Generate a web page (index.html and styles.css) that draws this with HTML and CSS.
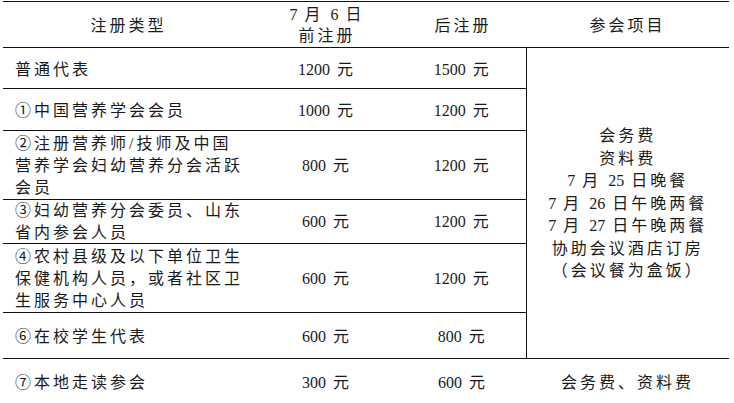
FILE: index.html
```html
<!DOCTYPE html>
<html lang="zh">
<head>
<meta charset="utf-8">
<title>注册类型</title>
<link rel="stylesheet" href="styles.css">
</head>
<body>
<table class="fees">
  <colgroup>
    <col class="c1"><col class="c2"><col class="c3"><col class="c4">
  </colgroup>
  <tr class="h-head">
    <td class="center single">注册类型</td>
    <td class="center two"><span class="n">7</span> 月 <span class="n">6</span> 日<br>前注册</td>
    <td class="center single">后注册</td>
    <td class="center single">参会项目</td>
  </tr>
  <tr class="h-r1 single-row">
    <td class="type">普通代表</td>
    <td class="center"><span class="n">1200</span> 元</td>
    <td class="center"><span class="n">1500</span> 元</td>
    <td class="center items" rowspan="6">会务费<br>资料费<br><span class="n">7</span> 月 <span class="n">25</span> 日晚餐<br><span class="n">7</span> 月 <span class="n">26</span> 日午晚两餐<br><span class="n">7</span> 月 <span class="n">27</span> 日午晚两餐<br>协助会议酒店订房<br>（会议餐为盒饭）</td>
  </tr>
  <tr class="h-r2 single-row">
    <td class="type">①中国营养学会会员</td>
    <td class="center"><span class="n">1000</span> 元</td>
    <td class="center"><span class="n">1200</span> 元</td>
  </tr>
  <tr class="h-r3 three-row">
    <td class="type">②注册营养师/技师及中国<br>营养学会妇幼营养分会活跃<br>会员</td>
    <td class="center"><span class="n">800</span> 元</td>
    <td class="center"><span class="n">1200</span> 元</td>
  </tr>
  <tr class="h-r4 two-row">
    <td class="type">③妇幼营养分会委员、山东<br>省内参会人员</td>
    <td class="center"><span class="n">600</span> 元</td>
    <td class="center"><span class="n">1200</span> 元</td>
  </tr>
  <tr class="h-r5 three-row">
    <td class="type">④农村县级及以下单位卫生<br>保健机构人员，或者社区卫<br>生服务中心人员</td>
    <td class="center"><span class="n">600</span> 元</td>
    <td class="center"><span class="n">1200</span> 元</td>
  </tr>
  <tr class="h-r6 single-row">
    <td class="type">⑥在校学生代表</td>
    <td class="center"><span class="n">600</span> 元</td>
    <td class="center"><span class="n">800</span> 元</td>
  </tr>
  <tr class="h-r7 single-row">
    <td class="type">⑦本地走读参会</td>
    <td class="center"><span class="n">300</span> 元</td>
    <td class="center"><span class="n">600</span> 元</td>
    <td class="center">会务费、资料费</td>
  </tr>
</table>
</body>
</html>
```

FILE: styles.css
```css
html, body {
  margin: 0;
  padding: 0;
  background: #fff;
  overflow: hidden;
}

body {
  width: 734px;
  height: 403px;
}

.fees {
  margin: 1px 0 0 3px;
  width: 726px;
  table-layout: fixed;
  border-collapse: collapse;
  border-top: 1px solid #111;
  font-family: "Liberation Serif", "Noto Sans CJK SC", serif;
  font-size: 16px;
  line-height: 22.5px;
  letter-spacing: 3px;
  color: #1a1a1a;
}

.c1 { width: 251px; }
.c2 { width: 146px; }
.c3 { width: 126px; }
.c4 { width: 203px; }

.fees td {
  padding: 0;
  vertical-align: middle;
  white-space: nowrap;
  border-bottom: 1px solid #111;
}

.fees td.type {
  padding-left: 12px;
  text-align: left;
}

.fees td.center {
  text-align: center;
}

.fees td.single,
.single-row td {
  padding-top: 4px;
}

.three-row td {
  padding-top: 2px;
  line-height: 22px;
}

.two-row td {
  line-height: 21.5px;
}

.fees td.items {
  padding-top: 2px;
  line-height: 22.5px;
}

.fees td.two {
  line-height: 21px;
}

.fees td.items {
  border-left: 1px solid #111;
}

.n {
  letter-spacing: 0;
}

.h-head { height: 46px; }
.h-r1 { height: 41px; }
.h-r2 { height: 42px; }
.h-r3 { height: 69px; }
.h-r4 { height: 44px; }
.h-r5 { height: 69px; }
.h-r6 { height: 46px; }
.h-r7 { height: 46px; }
```
